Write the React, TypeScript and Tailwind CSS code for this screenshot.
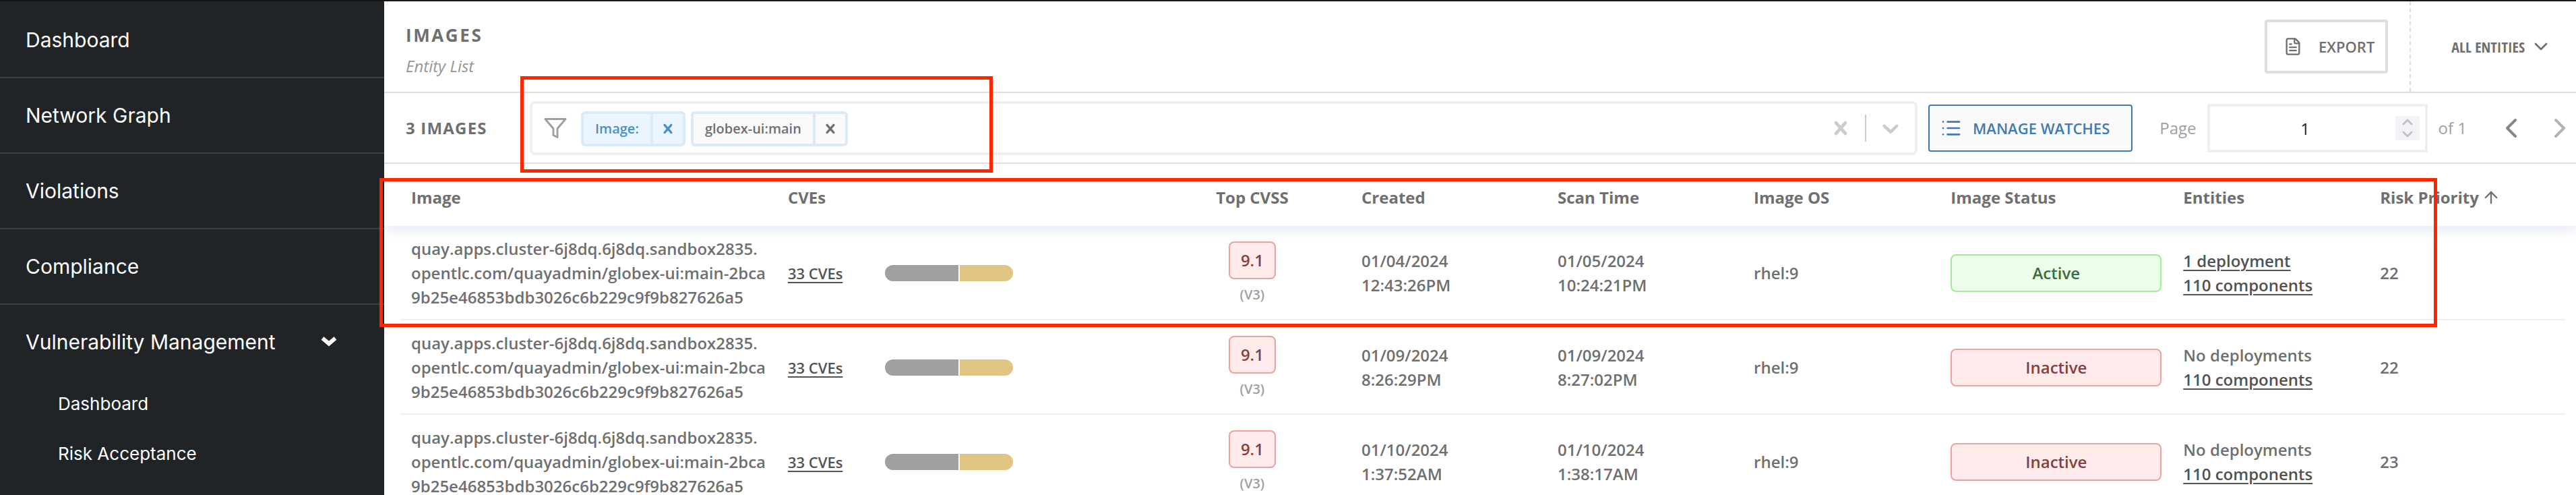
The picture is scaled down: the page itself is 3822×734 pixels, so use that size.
import type { ReactNode } from "react";
import { ArrowUp, ChevronDown, ChevronLeft, ChevronRight, ChevronUp, FileText, List } from "lucide-react";

const navItems = ["Dashboard", "Network Graph", "Violations", "Compliance"];
const subItems = ["Dashboard", "Risk Acceptance"];

const rows = [
  { created: ["01/04/2024", "12:43:26PM"], scanned: ["01/05/2024", "10:24:21PM"], active: true, deployments: "1 deployment", risk: 22 },
  { created: ["01/09/2024", "8:26:29PM"], scanned: ["01/09/2024", "8:27:02PM"], active: false, deployments: "No deployments", risk: 22 },
  { created: ["01/10/2024", "1:37:52AM"], scanned: ["01/10/2024", "1:38:17AM"], active: false, deployments: "No deployments", risk: 23 },
];

function CrossIcon({ className }: { className: string }) {
  return (
    <svg viewBox="0 0 20 20" className={className} fill="currentColor" aria-hidden="true">
      <path d="M14.348 14.849c-0.469 0.469-1.229 0.469-1.697 0l-2.651-3.030-2.651 3.029c-0.469 0.469-1.229 0.469-1.697 0-0.469-0.469-0.469-1.229 0-1.697l2.758-3.15-2.759-3.152c-0.469-0.469-0.469-1.228 0-1.697s1.228-0.469 1.697 0l2.652 3.031 2.651-3.031c0.469-0.469 1.228-0.469 1.697 0s0.469 1.229 0 1.697l-2.758 3.152 2.758 3.15c0.469 0.469 0.469 1.229 0 1.698z" />
    </svg>
  );
}

function CaretIcon({ className }: { className: string }) {
  return (
    <svg viewBox="0 0 20 20" className={className} fill="currentColor" aria-hidden="true">
      <path d="M4.516 7.548c0.436-0.446 1.043-0.481 1.576 0l3.908 3.747 3.908-3.747c0.533-0.481 1.141-0.446 1.574 0 0.436 0.445 0.408 1.197 0 1.615-0.406 0.418-4.695 4.502-4.695 4.502-0.217 0.223-0.502 0.335-0.787 0.335s-0.57-0.112-0.789-0.335c0 0-4.287-4.084-4.695-4.502s-0.436-1.17 0-1.615z" />
    </svg>
  );
}

function FilterIcon() {
  return (
    <svg viewBox="0 0 24 24" className="size-9 shrink-0 text-[#a0a0a0]" fill="none" stroke="currentColor" strokeWidth="2" strokeLinecap="round" strokeLinejoin="round" aria-hidden="true">
      <polygon points="22 3 2 3 10 12.46 10 19 14 21 14 12.46 22 3" />
    </svg>
  );
}

function Sidebar() {
  return (
    <nav className="w-[570px] shrink-0 bg-[#212427] pt-0.5 font-[Inter,sans-serif] text-[30px] leading-[36px] text-white">
      <ul>
        {navItems.map((item) => (
          <li key={item} className="border-b-2 border-[#3c3f42]">
            <a href="#" className="flex h-[110px] items-center pl-[38px]">{item}</a>
          </li>
        ))}
        <li>
          <button type="button" className="flex h-[110px] w-full items-center justify-between pr-[68px] pl-[38px]">
            Vulnerability Management
            <svg viewBox="0 0 28 28" className="size-7" fill="none" stroke="currentColor" strokeWidth="6" aria-hidden="true">
              <path d="M4.5 8.5 L14 16.5 L23.5 8.5" strokeLinejoin="miter" />
            </svg>
          </button>
          <ul className="text-[26px]">
            {subItems.map((item) => (
              <li key={item}>
                <a href="#" className="flex h-[74px] items-center pl-[86px]">{item}</a>
              </li>
            ))}
          </ul>
        </li>
      </ul>
    </nav>
  );
}

function PageHeader() {
  return (
    <header className="flex h-[136px] items-stretch border-b-2 border-[#dedede]">
      <div className="flex grow flex-col gap-2.5 pt-8 pl-8">
        <h1 className="text-[26px] leading-[36px] font-bold tracking-widest">IMAGES</h1>
        <p className="text-[24px] leading-[36px] text-[#969696] italic">Entity List</p>
      </div>
      <div className="flex items-center border-r-2 border-dashed border-[#dedede] pr-8">
        <button type="button" className="flex h-20 items-center gap-6 rounded border-4 border-[#dedede] bg-white pr-4 pl-6 text-[22px] leading-[36px] font-semibold">
          <FileText className="size-7" strokeWidth={2} aria-hidden="true" />
          EXPORT
        </button>
      </div>
      <button type="button" className="flex items-center gap-2 pr-9 pl-[60px] font-['Open_Sans_Condensed','Open_Sans',sans-serif] text-[22px] leading-[36px] font-bold">
        ALL ENTITIES
        <ChevronDown className="size-8" strokeWidth={2} aria-hidden="true" />
      </button>
    </header>
  );
}

function Chip({ children, label, tone }: { children: ReactNode; label: string; tone: "blue" | "plain" }) {
  return (
    <span
      className={
        tone === "blue"
          ? "flex h-[52px] items-stretch rounded-md border-4 border-[#d9eafb] bg-[#eaf5ff] text-[#478fca]"
          : "flex h-[52px] items-stretch rounded-md border-4 border-[#d9eafb] bg-[#fafafa] text-[#6f6f6f]"
      }
    >
      <span className="flex items-center border-r-4 border-[#d9eafb] px-[17px]">{children}</span>
      <button type="button" aria-label={label} className="flex w-11 items-center justify-center">
        <CrossIcon className="size-7" />
      </button>
    </span>
  );
}

function Toolbar() {
  return (
    <div className="flex items-center border-b-2 border-[#dedede] pt-3 pb-[11px] pl-8 text-[24px] leading-[36px]">
      <h2 className="w-[184px] shrink-0 font-bold tracking-wider">3 IMAGES</h2>
      <div className="flex h-20 grow items-center rounded-lg border-4 border-[#efefef] pr-4 pl-4">
        <FilterIcon />
        <div className="mt-0.5 ml-5 flex gap-2 text-[20px] font-semibold">
          <Chip tone="blue" label="Remove Image:">Image:</Chip>
          <Chip tone="plain" label="Remove globex-ui:main">globex-ui:main</Chip>
        </div>
        <input type="text" aria-label="Filter images" className="ml-2 min-w-0 grow outline-none" />
        <div className="flex h-10 items-center gap-4 text-[#cccccc]">
          <button type="button" aria-label="Clear filters">
            <CrossIcon className="size-10" />
          </button>
          <span className="w-0.5 self-stretch bg-[#cccccc]" />
          <button type="button" aria-label="Show filter options">
            <CaretIcon className="size-10" />
          </button>
        </div>
      </div>
      <button type="button" className="ml-4 flex h-[70px] items-center gap-4 rounded border-2 border-[#3f7ab8] bg-[#fafafa] pr-8 pl-4 text-[22px] font-semibold text-[#3f7ab8]">
        <List className="size-8" strokeWidth={2} aria-hidden="true" />
        MANAGE WATCHES
      </button>
      <div className="ml-10 flex items-center gap-4 text-[#a0a0a0]">
        <label htmlFor="page-number">Page</label>
        <div className="flex h-[72px] w-[327px] items-center border-4 border-[#efefef] pr-2 pl-2">
          <input
            id="page-number"
            type="number"
            defaultValue={1}
            min={1}
            max={1}
            className="h-full min-w-0 grow [appearance:textfield] text-center text-[#222222] outline-none [&::-webkit-inner-spin-button]:appearance-none"
          />
          <div className="flex flex-col bg-[#f3f3f7] text-[#c3c2cc]">
            <button type="button" aria-label="Next page number" className="flex h-[18px] w-9 items-center justify-center">
              <ChevronUp className="size-6" strokeWidth={3} aria-hidden="true" />
            </button>
            <button type="button" aria-label="Previous page number" className="flex h-[18px] w-9 items-center justify-center">
              <ChevronDown className="size-6" strokeWidth={3} aria-hidden="true" />
            </button>
          </div>
        </div>
        <span>of 1</span>
      </div>
      <div className="ml-[42px] flex gap-6">
        <button type="button" aria-label="Previous page">
          <ChevronLeft className="size-12 text-[#868686]" strokeWidth={2} aria-hidden="true" />
        </button>
        <button type="button" aria-label="Next page">
          <ChevronRight className="size-12 text-[#b3b3b3]" strokeWidth={2} aria-hidden="true" />
        </button>
      </div>
    </div>
  );
}

function CellLink({ children }: { children: ReactNode }) {
  return <a href="#" className="text-[#525252] underline decoration-2 underline-offset-4">{children}</a>;
}

function ImagesTable() {
  return (
    <div className="relative overflow-hidden pr-4 pl-6">
      <div className="pointer-events-none absolute inset-x-0 top-0 h-[92px] shadow-[0_4px_20px_0_rgba(120,130,210,0.22)]" />
      <table className="relative w-full table-fixed text-left text-[24px] leading-[36px] font-semibold">
        <colgroup>
          <col className="w-[17.4%]" />
          <col className="w-[17.4%]" />
          <col className="w-[9.1%]" />
          <col className="w-[9.06%]" />
          <col className="w-[9.06%]" />
          <col className="w-[9.1%]" />
          <col className="w-[10.74%]" />
          <col className="w-[9.09%]" />
          <col />
        </colgroup>
        <thead>
          <tr className="[&>th]:px-4 [&>th]:pt-8 [&>th]:pb-6">
            <th>Image</th>
            <th>CVEs</th>
            <th className="text-center">Top CVSS</th>
            <th>Created</th>
            <th>Scan Time</th>
            <th>Image OS</th>
            <th>Image Status</th>
            <th>Entities</th>
            <th aria-sort="ascending">
              <span className="flex items-center gap-1 whitespace-nowrap">
                Risk Priority
                <ArrowUp className="size-7" strokeWidth={2} aria-hidden="true" />
              </span>
            </th>
          </tr>
        </thead>
        <tbody>
          {rows.map((row) => (
            <tr key={row.created.join(" ")} className="border-b-2 border-[#efefef] [&>td]:px-4 [&>td]:pt-4 [&>td]:pb-3.5">
              <td>
                quay.apps.cluster-6j8dq.6j8dq.sandbox2835.
                <br />
                opentlc.com/quayadmin/globex-ui:main-2bca
                <br />
                9b25e46853bdb3026c6b229c9f9b827626a5
              </td>
              <td>
                <div className="flex items-center">
                  <span className="w-36 text-[22px]">
                    <CellLink>33 CVEs</CellLink>
                  </span>
                  <span className="flex h-6 w-[190px] gap-0.5 overflow-hidden rounded-full">
                    <span className="w-[109px] bg-[#a0a0a0]" />
                    <span className="grow bg-[#e0c583]" />
                  </span>
                </div>
              </td>
              <td>
                <div className="flex flex-col items-center gap-2">
                  <span className="flex h-14 w-[70px] items-center justify-center rounded-lg border-2 border-[#eea29f] bg-[#ffebeb] text-[#84403d]">9.1</span>
                  <span className="text-[20px] leading-[30px] text-[#a0a0a0]">(V3)</span>
                </div>
              </td>
              <td>
                {row.created[0]}
                <br />
                {row.created[1]}
              </td>
              <td>
                {row.scanned[0]}
                <br />
                {row.scanned[1]}
              </td>
              <td>rhel:9</td>
              <td>
                <span
                  className={
                    row.active
                      ? "flex h-14 items-center justify-center rounded-lg border-2 border-[#a5e99b] bg-[#ecfdea] text-[#35703a]"
                      : "flex h-14 items-center justify-center rounded-lg border-2 border-[#eea29f] bg-[#ffebeb] text-[#84403d]"
                  }
                >
                  {row.active ? "Active" : "Inactive"}
                </span>
              </td>
              <td>
                {row.active ? <CellLink>{row.deployments}</CellLink> : row.deployments}
                <br />
                <CellLink>110 components</CellLink>
              </td>
              <td>{row.risk}</td>
            </tr>
          ))}
        </tbody>
      </table>
    </div>
  );
}

export default function App() {
  return (
    <div className="relative flex h-screen overflow-hidden border-t-2 border-[#151515] bg-white font-['Open_Sans',sans-serif] text-[#6f6f6f]">
      <Sidebar />
      <main className="min-w-0 grow">
        <PageHeader />
        <Toolbar />
        <ImagesTable />
      </main>
      <div className="pointer-events-none absolute top-[111px] left-[772px] h-[143px] w-[701px] border-[5px] border-[#ff2600]" />
      <div className="pointer-events-none absolute top-[262px] left-[563px] h-[221px] w-[3053px] border-[5px] border-[#ff2600]" />
    </div>
  );
}
